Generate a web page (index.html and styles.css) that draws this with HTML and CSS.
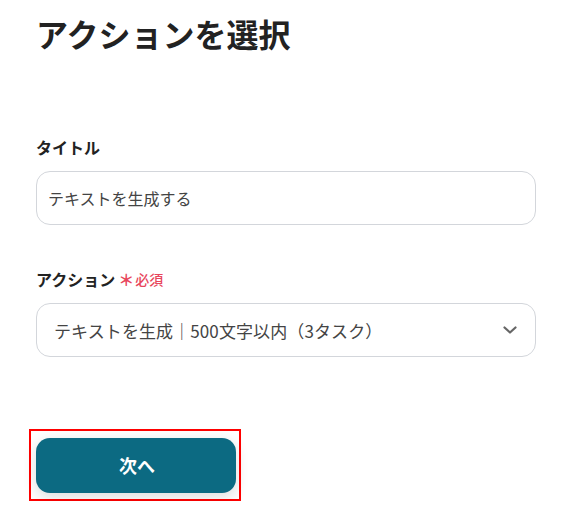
FILE: index.html
```html
<!DOCTYPE html>
<html lang="ja">
<head>
<meta charset="utf-8">
<link rel="stylesheet" href="styles.css">
</head>
<body>
<div class="page">
  <h1 class="title">アクションを選択</h1>
  <div class="field field-first">
    <div class="label">タイトル</div>
    <div class="input">テキストを生成する</div>
  </div>
  <div class="field">
    <div class="label">アクション<span class="req"><span class="ast">＊</span>必須</span></div>
    <div class="input select">
      <span class="select-text">テキストを生成｜500文字以内（3タスク）</span>
      <svg class="chev" width="14" height="8" viewBox="0 0 14 8"><path d="M1.5 1.5 L7 6.5 L12.5 1.5" fill="none" stroke="#666" stroke-width="2.2" stroke-linecap="round" stroke-linejoin="round"/></svg>
    </div>
  </div>
  <div class="btn-wrap">
    <button class="btn">次へ</button>
  </div>
</div>
</body>
</html>
```
FILE: styles.css
```css
* { box-sizing: border-box; }
html, body { margin: 0; padding: 0; background: #fff; }
body {
  font-family: "Noto Sans CJK JP", "Noto Sans", sans-serif;
  color: #222;
}
.page {
  width: 580px;
  padding: 9px 44px 0 36px;
}
.title {
  margin: 0;
  font-size: 32px;
  line-height: 48px;
  font-weight: 700;
  color: #222;
}
.field { display: flex; flex-direction: column; gap: 12px; margin-top: 42px; }
.field-first { margin-top: 78px; }
.label {
  font-size: 16px;
  line-height: 24px;
  font-weight: 700;
  color: #222;
  display: flex;
  align-items: center;
}
.req {
  color: #e8465c;
  font-size: 14px;
  font-weight: 500;
  margin-left: 3px;
  display: flex;
  align-items: center;
}
.ast { font-size: 16px; font-weight: 700; margin-right: 1px; }
.input {
  height: 54px;
  border: 1px solid #d3d6db;
  border-radius: 14px;
  padding: 0 11px;
  display: flex;
  align-items: center;
  font-size: 16px;
  color: #444;
}
.select {
  padding: 0 18px 0 17px;
  justify-content: space-between;
}
.select-text { font-size: 17px; letter-spacing: 0.1px; }
.btn-wrap {
  margin-top: 72px;
  margin-left: -7px;
  width: 212px;
  border: 2px solid #f00;
  padding: 7px 3px 6px 5px;
}
.btn {
  display: flex;
  align-items: center;
  justify-content: center;
  width: 200px;
  height: 55px;
  border: 0;
  border-radius: 14px;
  background: #0c6a82;
  color: #fff;
  font-family: "Noto Sans CJK JP", "Noto Sans", sans-serif;
  font-size: 18px;
  font-weight: 700;
  padding: 0 0 2px 2px;
  box-shadow: 0 4px 14px rgba(0, 0, 0, 0.14);
}
```
